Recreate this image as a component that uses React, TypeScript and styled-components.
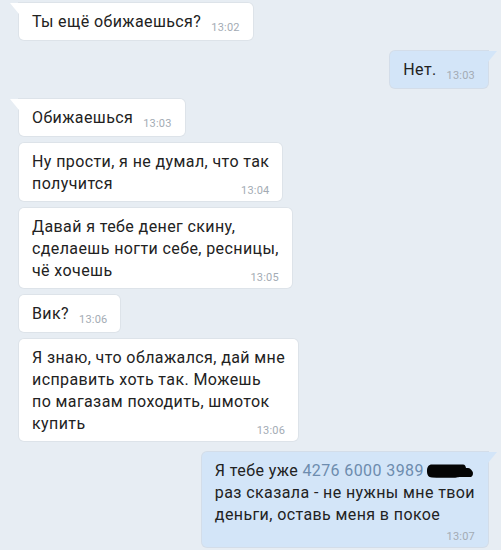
import styled, { createGlobalStyle } from 'styled-components';

const GlobalStyle = createGlobalStyle`
  html, body {
    margin: 0;
    padding: 0;
    background: #e7edf3;
  }
  body {
    font-family: Roboto, 'Noto Sans', 'Liberation Sans', sans-serif;
  }
`;

type Side = 'in' | 'out';

const Page = styled.div`
  width: 501px;
  height: 550px;
  box-sizing: border-box;
  padding: 3px 13px 0 19px;
  display: flex;
  flex-direction: column;
  background: #e7edf3;
  overflow: hidden;
`;

const Row = styled.div<{ $side: Side; $first: boolean }>`
  display: flex;
  justify-content: ${(p) => (p.$side === 'out' ? 'flex-end' : 'flex-start')};
  margin-top: ${(p) => (p.$first ? '11px' : '7px')};
  &:first-child {
    margin-top: 0;
  }
`;

const Bubble = styled.div<{ $side: Side; $tail: boolean }>`
  position: relative;
  box-sizing: border-box;
  padding: 8px 13px 7px 13px;
  background: ${(p) => (p.$side === 'out' ? '#d3e5f8' : '#ffffff')};
  border-radius: ${(p) =>
    p.$tail ? (p.$side === 'out' ? '5px 0 5px 5px' : '0 5px 5px 5px') : '5px'};
  box-shadow: 0 0 0 1px
    ${(p) => (p.$side === 'out' ? 'rgba(120, 150, 190, 0.18)' : 'rgba(0, 0, 0, 0.04)')};
  color: #222;
  font-size: 16px;
  letter-spacing: 0.4px;
  line-height: 22px;
  white-space: nowrap;
  &::before {
    content: '';
    display: ${(p) => (p.$tail ? 'block' : 'none')};
    position: absolute;
    top: 0;
    ${(p) => (p.$side === 'out' ? 'right: -9px;' : 'left: -9px;')}
    width: 9px;
    height: 11px;
    background: inherit;
    clip-path: ${(p) =>
      p.$side === 'out'
        ? 'polygon(0 0, 100% 0, 0 100%)'
        : 'polygon(0 0, 100% 0, 100% 100%)'};
  }
`;

const InlineTime = styled.span`
  display: inline-block;
  margin-left: 10px;
  font-size: 11px;
  letter-spacing: 0.2px;
  line-height: 11px;
  color: #a3abb4;
  vertical-align: -4px;
`;

const BlockTime = styled.div<{ $shift: number }>`
  text-align: right;
  margin-top: ${(p) => p.$shift}px;
  margin-bottom: -3px;
  font-size: 11px;
  letter-spacing: 0.2px;
  line-height: 12px;
  color: #a3abb4;
`;

const Card = styled.span`
  color: #6d8cae;
`;

const Redaction = styled.svg`
  display: inline-block;
  margin-left: 3px;
  vertical-align: -3px;
`;

function Blot() {
  return (
    <Redaction width="47" height="15" viewBox="0 0 47 15">
      <path
        d="M5 0.5 H36 C38 0.5 38.5 2 39 4 H41 C43 4 44 5.5 45.5 7.5 C46.5 9 46 12 44 13 H32 C30 14 20 14 5 13.5 C1.5 13.3 0 11 0 7 C0 3 1.5 0.5 5 0.5 Z"
        fill="#050505"
      />
    </Redaction>
  );
}

type Msg = {
  side: Side;
  first: boolean;
  time: string;
  lines: React.ReactNode[];
  shift?: number;
};

const messages: Msg[] = [
  { side: 'in', first: true, time: '13:02', lines: ['Ты ещё обижаешься?'] },
  { side: 'out', first: true, time: '13:03', lines: ['Нет.'] },
  { side: 'in', first: true, time: '13:03', lines: ['Обижаешься'] },
  {
    side: 'in',
    first: false,
    time: '13:04',
    lines: ['Ну прости, я не думал, что так', 'получится'],
    shift: -10,
  },
  {
    side: 'in',
    first: false,
    time: '13:05',
    lines: ['Давай я тебе денег скину,', 'сделаешь ногти себе, ресницы,', 'чё хочешь'],
    shift: -10,
  },
  { side: 'in', first: false, time: '13:06', lines: ['Вик?'] },
  {
    side: 'in',
    first: false,
    time: '13:06',
    lines: [
      'Я знаю, что облажался, дай мне',
      'исправить хоть так. Можешь',
      'по магазам походить, шмоток',
      'купить',
    ],
    shift: -10,
  },
  {
    side: 'out',
    first: true,
    time: '13:07',
    lines: [
      <>
        Я тебе уже <Card>4276 6000 3989</Card>
        <Blot />
      </>,
      'раз сказала - не нужны мне твои',
      'деньги, оставь меня в покое',
    ],
    shift: 5,
  },
];

function Message({ msg }: { msg: Msg }) {
  const single = msg.lines.length === 1;
  return (
    <Row $side={msg.side} $first={msg.first}>
      <Bubble $side={msg.side} $tail={msg.first}>
        {single ? (
          <>
            {msg.lines[0]}
            <InlineTime>{msg.time}</InlineTime>
          </>
        ) : (
          <>
            {msg.lines.map((line, i) => (
              <div key={i}>{line}</div>
            ))}
            <BlockTime $shift={msg.shift ?? -10}>{msg.time}</BlockTime>
          </>
        )}
      </Bubble>
    </Row>
  );
}

export default function App() {
  return (
    <>
      <GlobalStyle />
      <Page>
        {messages.map((m, i) => (
          <Message key={i} msg={m} />
        ))}
      </Page>
    </>
  );
}
